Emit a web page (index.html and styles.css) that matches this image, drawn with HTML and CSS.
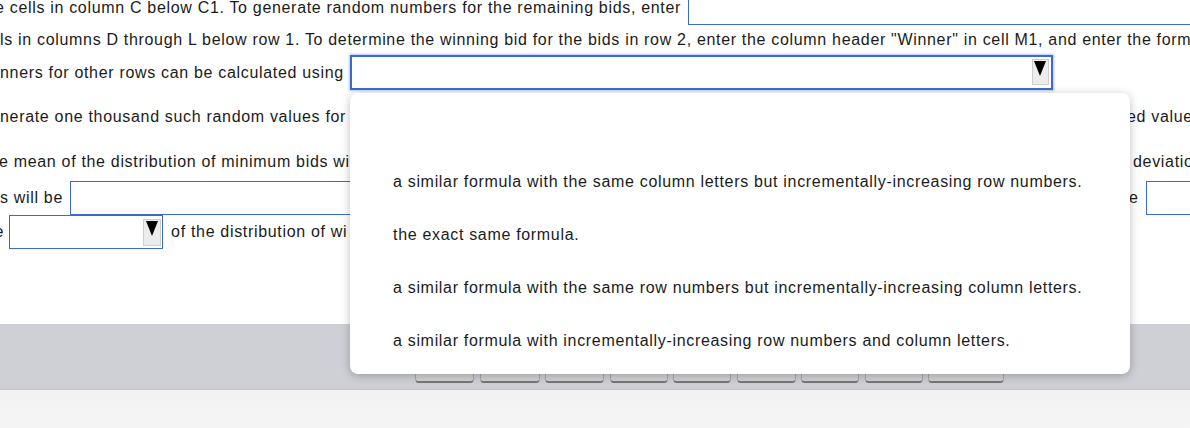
FILE: index.html
```html
<!DOCTYPE html>
<html lang="en">
<head>
<meta charset="utf-8">
<title>Bids worksheet</title>
<link rel="stylesheet" href="styles.css">
</head>
<body>
<div class="page">
  <div class="content">
    <div class="row r1">
      <span class="txt lead-e">e cells in column C below C1. To generate random numbers for the remaining bids, enter</span>
      <input class="field f1" type="text" aria-label="answer 1">
    </div>
    <div class="row r2">
      <span class="txt">ls in columns D through L below row 1. To determine the winning bid for the bids in row 2, enter the column header "Winner" in cell M1, and enter the formula</span>
    </div>
    <div class="row r3">
      <span class="txt">nners for other rows can be calculated using</span>
      <div class="select sel-focus" role="combobox" aria-expanded="true">
        <span class="arrow"><svg viewBox="0 0 12 15" width="12" height="15"><polygon points="0,0 12,0 6,15" fill="#000"/></svg></span>
      </div>
    </div>
    <div class="row r4">
      <span class="txt">nerate one thousand such random values for the bids</span>
      <span class="spacer"></span>
      <span class="tail t4">ed values</span>
    </div>
    <div class="row r5">
      <span class="txt lead-e1">e mean of the distribution of minimum bids will be</span>
      <span class="spacer"></span>
      <span class="tail t5">deviation</span>
    </div>
    <div class="row r6">
      <span class="txt">s will be</span>
      <input class="field f6" type="text" aria-label="answer 4">
      <span class="spacer"></span>
      <span class="tail t6">e<input class="field f6b" type="text" aria-label="answer 5"></span>
    </div>
    <div class="row r7">
      <span class="txt lead-e7">e</span>
      <div class="select sel-small" role="combobox">
        <span class="arrow"><svg viewBox="0 0 12 15" width="12" height="15"><polygon points="0,0 12,0 6,15" fill="#000"/></svg></span>
      </div>
      <span class="txt after-sel">of the distribution of wi</span>
    </div>
  </div>

  <div class="toolbar">
    <span class="tbtn w59"></span>
    <span class="tbtn w60"></span>
    <span class="tbtn w59"></span>
    <span class="tbtn w58"></span>
    <span class="tbtn w58"></span>
    <span class="tbtn w59"></span>
    <span class="tbtn w58"></span>
    <span class="tbtn w58"></span>
    <span class="tbtn w76"></span>
  </div>
  <div class="footer"></div>

  <ul class="popup" role="listbox">
    <li class="opt"></li>
    <li class="opt">a similar formula with the same column letters but incrementally-increasing row numbers.</li>
    <li class="opt">the exact same formula.</li>
    <li class="opt">a similar formula with the same row numbers but incrementally-increasing column letters.</li>
    <li class="opt">a similar formula with incrementally-increasing row numbers and column letters.</li>
  </ul>
</div>
</body>
</html>
```
FILE: styles.css
```css
html, body {
  margin: 0;
  padding: 0;
}
body {
  width: 1190px;
  height: 428px;
  overflow: hidden;
  background: #fff;
  font-family: "Liberation Sans", Arial, sans-serif;
  font-size: 16px;
  letter-spacing: 0.68px;
  color: #1b1b1b;
}
.page {
  position: relative;
  width: 1190px;
  height: 428px;
  overflow: hidden;
}
.content {
  margin-top: -9px;
  width: 1190px;
}
.row {
  display: flex;
  align-items: center;
  white-space: nowrap;
  height: 34px;
}
.txt { flex-shrink: 0; }
.spacer { flex: 1 1 auto; }
.tail {
  flex-shrink: 0;
  display: flex;
  align-items: center;
  overflow: visible;
}
.r2 { height: 30px; }
.r3 { height: 35px; }
.r4 { margin-top: 10px; }
.r5 { margin-top: 11px; }
.r6 { margin-top: 2px; }

.lead-e { margin-left: -5px; }
.lead-e1 { margin-left: -1px; }
.lead-e7 { margin-left: -5.5px; }

.field {
  flex-shrink: 0;
  box-sizing: border-box;
  height: 34px;
  margin: 0;
  padding: 0 6px;
  border: 1px solid #3d6cc6;
  border-radius: 0;
  background: #fff;
  font: inherit;
  outline: none;
}
.f1 { margin-left: 7px; width: 600px; }
.f6 { margin-left: 7px; width: 420px; }
.f6b { margin-left: 7px; width: 120px; }
.t4 { width: 63px; }
.t5 { width: 57px; }
.t6 { width: 61px; }

.select {
  flex-shrink: 0;
  box-sizing: border-box;
  display: flex;
  justify-content: flex-end;
  align-items: flex-start;
  background: #fff;
}
.sel-focus {
  margin-left: 6px;
  width: 703px;
  height: 35px;
  border: 2px solid #3d6acb;
  box-shadow: 0 0 2px 1px rgba(90, 130, 220, 0.45);
  padding: 2px 2px 0 0;
}
.sel-focus .arrow { width: 17px; height: 26px; }
.sel-small {
  margin-left: 5px;
  width: 154px;
  height: 34px;
  border: 1px solid #3d6cc6;
  padding: 3px 1px 0 0;
}
.sel-small .arrow { width: 18px; height: 27px; }
.arrow {
  box-sizing: border-box;
  display: flex;
  justify-content: center;
  align-items: flex-start;
  padding-top: 1px;
  background: #ececec;
  border: 1px solid #cdcdcd;
}
.arrow svg { display: block; }
.after-sel { margin-left: 8px; }

.toolbar {
  margin-top: 75px;
  height: 66px;
  box-sizing: border-box;
  background: #cfd0d5;
  border-bottom: 1px solid #c5c6c9;
  display: flex;
  align-items: flex-end;
  gap: 5.5px;
  padding: 0 0 6px 415px;
}
.tbtn {
  box-sizing: border-box;
  height: 44px;
  background: #d3d3d5;
  border: 1px solid #a9a9ac;
  border-bottom: 2px solid #77777a;
  border-radius: 4px;
}
.w58 { width: 58px; }
.w59 { width: 59px; }
.w60 { width: 60px; }
.w76 { width: 76px; }
.footer {
  height: 40px;
  background: linear-gradient(#f1f1f1, #f5f5f5);
}

.popup {
  position: absolute;
  left: 350px;
  top: 93px;
  width: 780px;
  height: 281px;
  box-sizing: border-box;
  margin: 0;
  padding: 10px 0 7px;
  list-style: none;
  background: #fff;
  border-radius: 8px;
  box-shadow: 0 2px 10px rgba(0, 0, 0, 0.25);
}
.opt {
  box-sizing: border-box;
  height: 52.8px;
  display: flex;
  align-items: center;
  padding-left: 43px;
  white-space: nowrap;
}
```
